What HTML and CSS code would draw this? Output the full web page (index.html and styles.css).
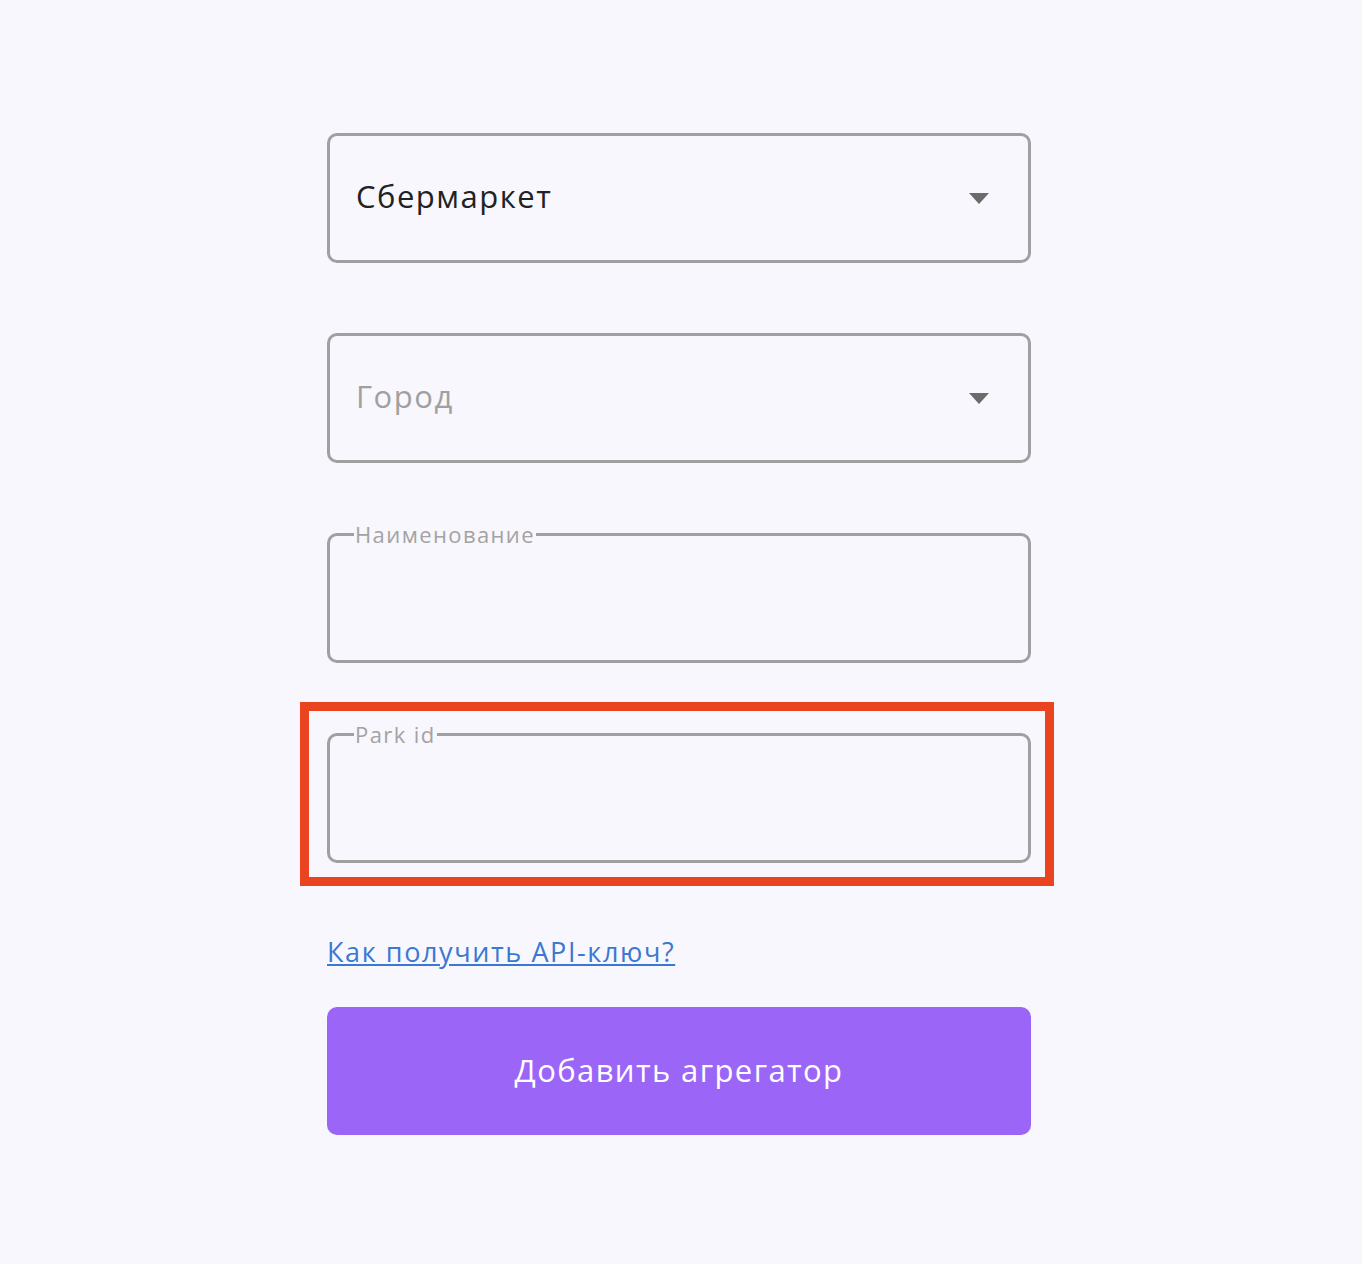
FILE: index.html
```html
<!DOCTYPE html>
<html lang="ru">
<head>
    <meta charset="UTF-8">
    <meta name="viewport" content="width=device-width, initial-scale=1.0">
    <title>Добавить агрегатор</title>
    <link rel="stylesheet" href="styles.css">
</head>
<body>
    <div class="form">
        <div class="field select">
            <span class="select-value">Сбермаркет</span>
            <svg class="arrow" width="20" height="11" viewBox="0 0 20 11"><path d="M0 0 H20 L10 11 Z" fill="#6b6b6b"/></svg>
        </div>

        <div class="field select">
            <span class="select-value placeholder">Город</span>
            <svg class="arrow" width="20" height="11" viewBox="0 0 20 11"><path d="M0 0 H20 L10 11 Z" fill="#6b6b6b"/></svg>
        </div>

        <div class="field text-field">
            <label class="field-label">Наименование</label>
            <input type="text" class="field-input">
        </div>

        <div class="field text-field">
            <label class="field-label">Park id</label>
            <input type="text" class="field-input">
            <div class="highlight"></div>
        </div>

        <a href="#" class="help-link">Как получить API-ключ?</a>

        <button class="submit">Добавить агрегатор</button>
    </div>
</body>
</html>
```

FILE: styles.css
```css
body {
    margin: 0;
    padding-right: 4px;
    background-color: #f8f7fd;
    font-family: 'Open Sans', 'Liberation Sans', sans-serif;
}

.form {
    width: 704px;
    margin: 0 auto;
    padding-top: 133px;
    display: flex;
    flex-direction: column;
    gap: 70px;
}

.field {
    position: relative;
    box-sizing: border-box;
    height: 130px;
    border: 3px solid #a0a0a0;
    border-radius: 10px;
    display: flex;
    align-items: center;
    padding: 0 39px 0 26px;
}

.select-value {
    flex: 1;
    margin-top: -4px;
    font-size: 31px;
    letter-spacing: 1.5px;
    color: #222222;
}

.select-value.placeholder {
    color: #a0a0a0;
}

.arrow {
    display: block;
}

.field-label {
    position: absolute;
    top: -15px;
    left: 24px;
    padding: 0 1px;
    background-color: #f8f7fd;
    font-size: 22px;
    line-height: 26px;
    letter-spacing: 1.4px;
    color: #a3a3a3;
}

.field-input {
    flex: 1;
    border: none;
    background: transparent;
    font-family: inherit;
    font-size: 30px;
    outline: none;
    padding: 0;
}

.highlight {
    position: absolute;
    top: -34px;
    left: -30px;
    right: -26px;
    bottom: -26px;
    border: 9px solid #e9431f;
    pointer-events: none;
}

.help-link {
    margin-top: 3px;
    align-self: flex-start;
    font-size: 27px;
    line-height: 32px;
    letter-spacing: 1.6px;
    color: #3b78d3;
}

.submit {
    margin-top: -31px;
    height: 128px;
    padding-bottom: 4px;
    border: none;
    border-radius: 10px;
    background-color: #9b66f7;
    color: #ffffff;
    font-family: inherit;
    font-size: 31px;
    letter-spacing: 1.4px;
    cursor: pointer;
}
```
